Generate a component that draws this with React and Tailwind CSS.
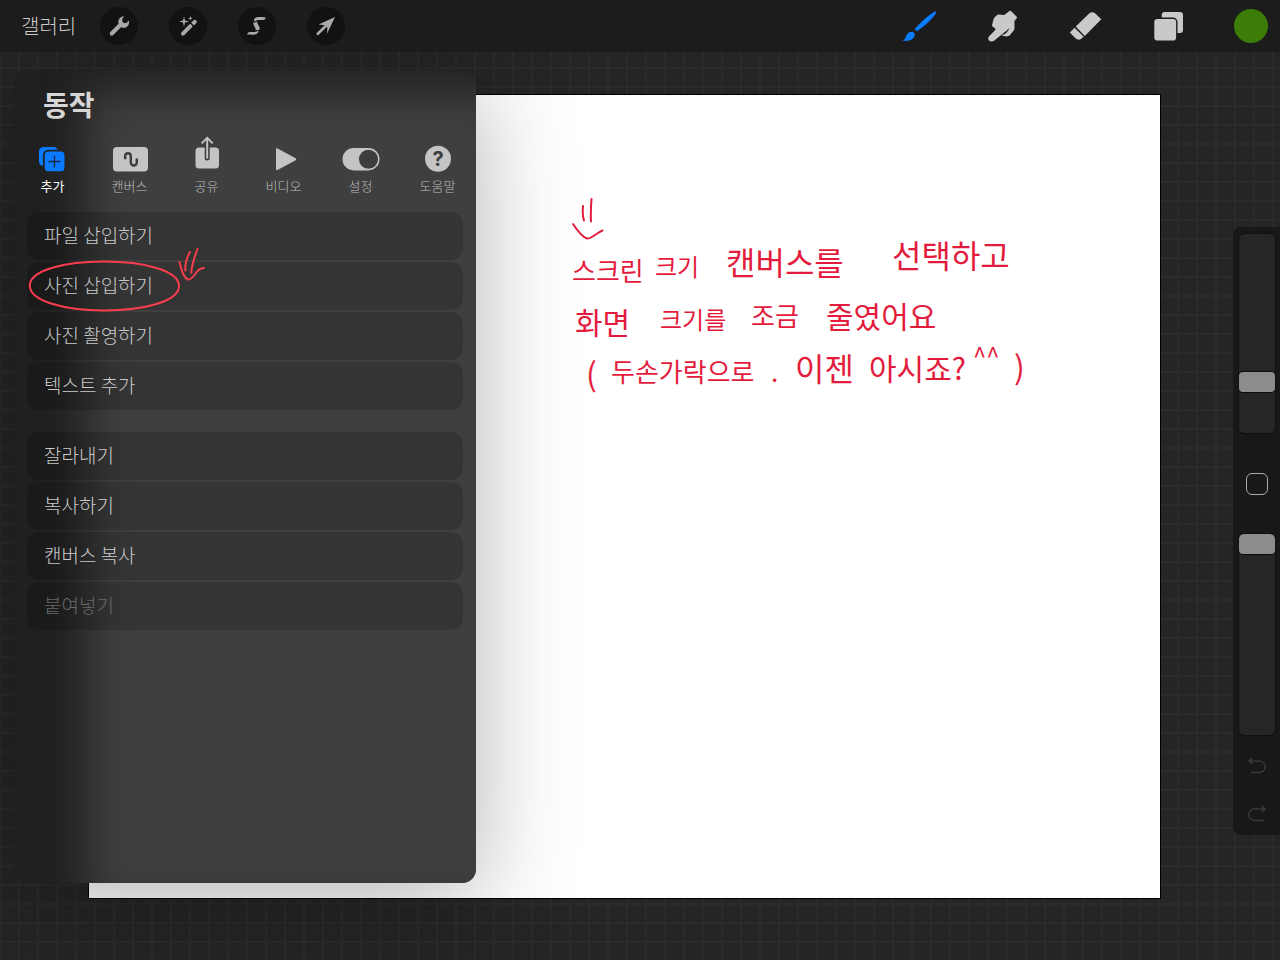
import React, { useState } from "react";

const tools = [
  {
    label: "동작",
    icon: (
      <>
        <path d="M11.8 26.4 20.5 17.8" stroke="#a9a9a9" strokeWidth="4.2" strokeLinecap="round" />
        <path
          d="M23.2 9.2c-3.4.7-5.6 3.9-4.6 7.4.8 3 3.4 4.8 6.2 4.2 2.6-.5 4.4-2.8 4.3-6l-.7-1.3-1.5 2.3-3.1.4-1.7-2.5.5-2.6 1.6-1.6z"
          fill="#a9a9a9"
        />
      </>
    ),
  },
  {
    label: "조정",
    icon: (
      <>
        <path d="M14 26.6 21.4 19.2" stroke="#a9a9a9" strokeWidth="4" strokeLinecap="round" />
        <path d="M23.6 17 25.8 14.8" stroke="#a9a9a9" strokeWidth="4" strokeLinecap="round" />
        <path d="M20.8 15.2 25.6 20" stroke="#121212" strokeWidth="1.3" />
        <path d="M15 9.6 16 13.6 20 14.6 16 15.6 15 19.8 14 15.6 10 14.6 14 13.6z" fill="#a9a9a9" />
        <path d="M21.4 9 22 10.7 23.6 11.3 22 11.9 21.4 13.6 20.8 11.9 19.2 11.3 20.8 10.7z" fill="#a9a9a9" />
      </>
    ),
  },
  {
    label: "선택",
    icon: (
      <>
        <path
          d="M27.4 10.2c.2 1.6-.6 2.7-2.2 2.8l-4.6.1c-1 0-2 .3-2.9.9-.9.5-1.7.4-1.8-.3.1-2 1.8-3.7 4.3-3.7 2.8-.1 5.2.3 7.2.2z"
          fill="#a9a9a9"
        />
        <path d="M15.2 15.6c1.6-.2 2.8-.6 3.8-1.2.2 2.2 1.8 3.8 2.4 5.6.3 1 .2 2.1-.2 3h-3.6c.2-2.6-2.2-3.9-2.4-7.4z" fill="#a9a9a9" />
        <path d="M9.3 27.6c0-1.6 1-2.6 2.6-2.6h4.2c1.6 0 3.2-.5 4.7-1.4-.5 2.5-2.2 4.2-5 4.2-2.4.1-4.4-.2-6.5-.2z" fill="#a9a9a9" />
      </>
    ),
  },
  {
    label: "변형",
    icon: (
      <>
        <path d="M10.8 26.8 19 18.8" stroke="#a9a9a9" strokeWidth="2.6" strokeLinecap="round" />
        <path d="M28 10 11.6 17.6 18 18.2 20.4 20.6 20 26.8z" fill="#a9a9a9" />
      </>
    ),
  },
];

const brushes = [
  {
    label: "브러시",
    icon: (
      <g fill="#0a7aff">
        <path d="M33.6 2.6c.9.7.3 1.9-.6 3.1-4.8 6.2-10.6 11.8-18.3 16.6l-2.1-2.2C18.2 13.6 24.6 7.8 31 3.4c1-.7 1.9-1.2 2.6-.8z" />
        <path d="M4 27.6c.8-3.2 3.6-5 6.2-4.8 1.8.2 2.9 1.7 2.5 3.7-.8 3.8-5.6 6.4-12.4 5.1 2-.7 3.1-1.8 3.7-4z" />
      </g>
    ),
  },
  {
    label: "스머지",
    icon: (
      <path
        d="M4 31.6c-1.3-1.3-1-3.2.3-4.6l5.5-5.5c.9-.9.9-1.8-.1-2.5l-1.600-1.100c-.9-.6-1.200-1.500-.9-2.500l1.200-4.900c.2-.9.8-1.700 1.500-2.400l2-1.900c.8-.7 1.700-.8 2.700-.6l3.300.4c.7.1 1.400-.1 2-.5l4.300-3.300c.8-.6 1.700-.4 2.300.2l5 5.200c.6.7.5 1.400-.1 2.100l-2 2.200.1 7.400c0 .9-.4 1.700-1 2.400L25 26c-1.600 1.500-3.900 1.800-6.300 1.100-1.100-.3-2-.6-1.900-1 .1-.5 1.500-.1 2.800-.8 1.800-1 3.600-3.800 5-6.300-1.200 1-2 1.600-2.900 2.500L10 31.100c-1.600 1.700-4.500 2-6 .5z"
        fill="#c9c9c9"
      />
    ),
  },
  {
    label: "지우개",
    icon: (
      <g fill="#c9c9c9">
        <path d="M7.7 17.6 21.2 4.4c1.9-1.7 4.2-1.7 6.1 0l6 5.900L16.800 26.900z" />
        <path d="M6.6 18.7 1.8 23.5l5.7 5.8c1.9 1.8 4 1.9 5.8.5l2.4-2z" />
      </g>
    ),
  },
  {
    label: "레이어",
    icon: (
      <>
        <rect x="10.7" y="3" width="21.3" height="21" rx="3" fill="#c9c9c9" />
        <rect x="2.6" y="9.2" width="23.2" height="23" rx="3.8" fill="#c9c9c9" stroke="#1d1d1d" strokeWidth="1.4" />
      </>
    ),
  },
];

const tabs = [
  {
    label: "추가",
    icon: (
      <>
        <rect x="6" y="11" width="19" height="19" rx="4.5" fill="#0a7aff" />
        <rect x="10.8" y="14.6" width="21.6" height="21.6" rx="4.8" fill="#0a7aff" stroke="#222" strokeWidth="1.8" />
        <path d="M21.5 19.5v12M15.5 25.5h12" stroke="#1b2b40" strokeWidth="1.4" />
      </>
    ),
  },
  {
    label: "캔버스",
    icon: (
      <>
        <rect x="3" y="11" width="35" height="24.6" rx="4" fill="#c4c4c4" />
        <path d="M15.2 23.2v-3.2a2.8 2.8 0 0 1 5.6 0v6.5a3 3 0 0 0 6 0v-4" fill="none" stroke="#3d3d3d" strokeWidth="2.4" />
      </>
    ),
  },
  {
    label: "공유",
    icon: (
      <>
        <rect x="8.5" y="11.4" width="23.5" height="21" rx="3.5" fill="#c4c4c4" />
        <path d="M20.2 8v14" stroke="#3d3d3d" strokeWidth="5" strokeLinecap="round" />
        <path d="M20.2 2v20.5M14.7 7.4l5.5-5.6 5.5 5.6" fill="none" stroke="#c4c4c4" strokeWidth="1.9" />
      </>
    ),
  },
  {
    label: "비디오",
    icon: <path d="M12 13.5c0-1 .8-1.5 1.6-1l18 9.800c.9.5.9 1.4 0 1.9l-18 9.900c-.8.4-1.600 0-1.600-1z" fill="#c4c4c4" />,
  },
  {
    label: "설정",
    icon: (
      <>
        <rect x="1.5" y="12" width="37" height="22.4" rx="11.2" fill="#c4c4c4" />
        <circle cx="27.5" cy="23.2" r="9.5" fill="#3d3d3d" />
      </>
    ),
  },
  {
    label: "도움말",
    icon: (
      <>
        <circle cx="20" cy="22.7" r="13" fill="#c4c4c4" />
        <text x="20" y="30" textAnchor="middle" fontSize="20" fontWeight="700" fill="#3d3d3d" fontFamily="Inter, sans-serif">
          ?
        </text>
      </>
    ),
  },
];

const groups = [
  ["파일 삽입하기", "사진 삽입하기", "사진 촬영하기", "텍스트 추가"],
  ["잘라내기", "복사하기", "캔버스 복사", "붙여넣기"],
];

const notes = [
  { text: "스크린", x: 483, y: 186, size: 26 },
  { text: "크기", x: 566, y: 181, size: 24 },
  { text: "캔버스를", x: 637, y: 180, size: 32 },
  { text: "선택하고", x: 803, y: 173, size: 32 },
  { text: "화면", x: 486, y: 239, size: 30 },
  { text: "크기를", x: 571, y: 234, size: 24 },
  { text: "조금", x: 662, y: 231, size: 26 },
  { text: "줄였어요", x: 737, y: 233, size: 30 },
  { text: "(", x: 497, y: 291, size: 32 },
  { text: "두손가락으로", x: 522, y: 287, size: 26 },
  { text: ".", x: 682, y: 287, size: 26 },
  { text: "이젠", x: 706, y: 286, size: 32 },
  { text: "아시죠?", x: 780, y: 285, size: 30 },
  { text: "^^", x: 884, y: 270, size: 24 },
  { text: ")", x: 925, y: 284, size: 32 },
];

const sliderClass =
  "block w-[36px] cursor-pointer appearance-none rounded-[5px] bg-[#262626] outline outline-[#111111] [direction:rtl] [writing-mode:vertical-lr] [&::-webkit-slider-thumb]:h-[20px] [&::-webkit-slider-thumb]:w-[36px] [&::-webkit-slider-thumb]:appearance-none [&::-webkit-slider-thumb]:rounded-[4px] [&::-webkit-slider-thumb]:bg-[#8c8c8c] [&::-webkit-slider-thumb]:shadow-[0_0_0_1px_#0c0c0c]";

function TopBar() {
  return (
    <header className="relative z-20 flex h-[52px] items-center justify-between bg-[#1c1c1c] pr-3 pl-[21px]">
      <div className="flex items-center">
        <button type="button" className="text-[20px] leading-7 text-[#cccccc]">
          갤러리
        </button>
        <nav className="ml-6 flex gap-[31px]" aria-label="편집 도구">
          {tools.map((t) => (
            <button key={t.label} type="button" aria-label={t.label} className="size-[38px] rounded-full bg-[#121212]">
              <svg viewBox="0 0 38 38" className="size-[38px]" fill="none" aria-hidden="true">
                {t.icon}
              </svg>
            </button>
          ))}
        </nav>
      </div>
      <nav className="flex items-center gap-[49px]" aria-label="페인팅 도구">
        {brushes.map((b) => (
          <button key={b.label} type="button" aria-label={b.label} className="size-[34px]">
            <svg viewBox="0 0 34 34" className="size-[34px] overflow-visible" aria-hidden="true">
              {b.icon}
            </svg>
          </button>
        ))}
        <button type="button" aria-label="색상" className="size-[34px] rounded-full bg-[#3b7d06]" />
      </nav>
    </header>
  );
}

function ActionsPanel() {
  const [active, setActive] = useState("추가");
  return (
    <section
      aria-label="동작"
      className="absolute top-[18px] bottom-[77px] left-[14px] w-[462px] rounded-[14px] shadow-[0_18px_100px_rgba(0,0,0,0.3)]"
    >
      <div className="relative h-full overflow-hidden rounded-[14px] bg-[#202020]">
        <div className="absolute top-[20px] -right-10 -bottom-6 left-[72px] bg-[#3f3f3f] blur-[22px]" />
        <div className="relative">
          <h1 className="px-[29px] pt-[14px] text-[28px] leading-10 font-bold text-[#d6d6d6]">동작</h1>
          <div className="mt-3 grid grid-cols-6" role="tablist">
            {tabs.map((t) => (
              <button
                key={t.label}
                type="button"
                role="tab"
                aria-selected={active === t.label}
                onClick={() => setActive(t.label)}
                className={
                  active === t.label
                    ? "flex flex-col items-center gap-1 text-[13px] leading-5 font-normal text-white"
                    : "flex flex-col items-center gap-1 text-[13px] leading-5 text-[#bcbcbc]"
                }
              >
                <svg viewBox="0 0 40 36" className="h-9 w-10" aria-hidden="true">
                  {t.icon}
                </svg>
                {t.label}
              </button>
            ))}
          </div>
          <div className="mt-4 mr-[13px] ml-[13px] flex flex-col gap-[22px]">
            {groups.map((items) => (
              <ul key={items[0]} className="flex flex-col gap-[2px]">
                {items.map((item) => (
                  <li key={item}>
                    <button
                      type="button"
                      disabled={item === "붙여넣기"}
                      className="flex h-12 w-full items-center rounded-xl bg-black/16 px-[17px] pb-[2px] text-left text-[19px] leading-7 text-[#cacaca] disabled:text-[#686868]"
                    >
                      {item}
                    </button>
                  </li>
                ))}
              </ul>
            ))}
          </div>
        </div>
      </div>
      <svg
        viewBox="0 0 200 80"
        className="pointer-events-none absolute top-[170px] left-[6px] h-20 w-[200px]"
        fill="none"
        stroke="#f83e4e"
        strokeLinecap="round"
        aria-hidden="true"
      >
        <path
          d="M84 21.5C45 21.5 10 30 9.8 45.5 9.6 61 44 70.4 84 70.4s75-8.9 75-24.4S124 21.5 84 21.5z"
          strokeWidth="2"
        />
        <path d="M159.5 22c1.5 7 4.5 16 8.5 17.500 3 1 7-5 9.500-8.500 2-2 4-3.200 6.500-3M170 12c-3 5-5 12-4.600 18.500M177.500 9c-3 8-6 17-6.200 24" strokeWidth="2" />
      </svg>
    </section>
  );
}

function SideBar() {
  const [size, setSize] = useState(23);
  const [opacity, setOpacity] = useState(100);
  return (
    <aside className="absolute top-[175px] right-0 flex w-[47px] flex-col items-center rounded-l-lg bg-[#181818] pt-[7px] pb-3">
      <input
        type="range"
        aria-label="브러시 크기"
        value={size}
        onChange={(e) => setSize(Number(e.target.value))}
        className={`h-[199px] ${sliderClass}`}
      />
      <button type="button" aria-label="수정" className="mt-10 size-[22px] rounded-md border border-[#a8a8a8]" />
      <input
        type="range"
        aria-label="브러시 불투명도"
        value={opacity}
        onChange={(e) => setOpacity(Number(e.target.value))}
        className={`mt-[39px] h-[201px] ${sliderClass}`}
      />
      <button type="button" aria-label="실행 취소" className="mt-5 size-5">
        <svg viewBox="0 0 20 20" className="size-5" fill="none" aria-hidden="true">
          <path d="M4 6h8.5a5.7 5.7 0 0 1 0 11.4H4" stroke="#373737" strokeWidth="1.5" />
          <path d="M.8 6 5.4 2v8z" fill="#373737" />
        </svg>
      </button>
      <button type="button" aria-label="다시 실행" className="mt-7 size-5">
        <svg viewBox="0 0 20 20" className="size-5" fill="none" aria-hidden="true">
          <path d="M16 6H7.5a5.7 5.7 0 0 0 0 11.4H17" stroke="#373737" strokeWidth="1.5" />
          <path d="M19.4 6 14.8 2v8z" fill="#373737" />
        </svg>
      </button>
    </aside>
  );
}

export default function App() {
  return (
    <div className="flex min-h-screen flex-col bg-[#252525] font-['Noto_Sans_CJK_KR',sans-serif] font-light">
      <TopBar />
      <main className="relative flex flex-1 overflow-hidden bg-[linear-gradient(to_right,#2b2b2b_2px,transparent_2px),linear-gradient(to_bottom,#2b2b2b_2px,transparent_2px)] bg-[size:19px_19px] bg-[position:-1px_-4px] pt-[43px] pr-[120px] pb-[62px] pl-[89px]">
        <div className="min-h-[803px] flex-1 overflow-hidden bg-white outline outline-black">
          <svg width="1071" height="400" fill="none" role="img" aria-label="캔버스 메모">
            <path
              d="M484 129c4 6 9 13 14 14.5 4 .5 9-5 15.5-8M494 111c-.5 5-.5 10 1 14.5M502.500 104c-.5 7-1 14-.5 22.500"
              stroke="#e31c3d"
              strokeWidth="2"
              strokeLinecap="round"
              strokeLinejoin="round"
            />
            {notes.map((n) => (
              <text key={n.text} x={n.x} y={n.y} fontSize={n.size} fontWeight="400" fill="#e31c3d">
                {n.text}
              </text>
            ))}
          </svg>
        </div>
        <ActionsPanel />
        <SideBar />
      </main>
    </div>
  );
}
